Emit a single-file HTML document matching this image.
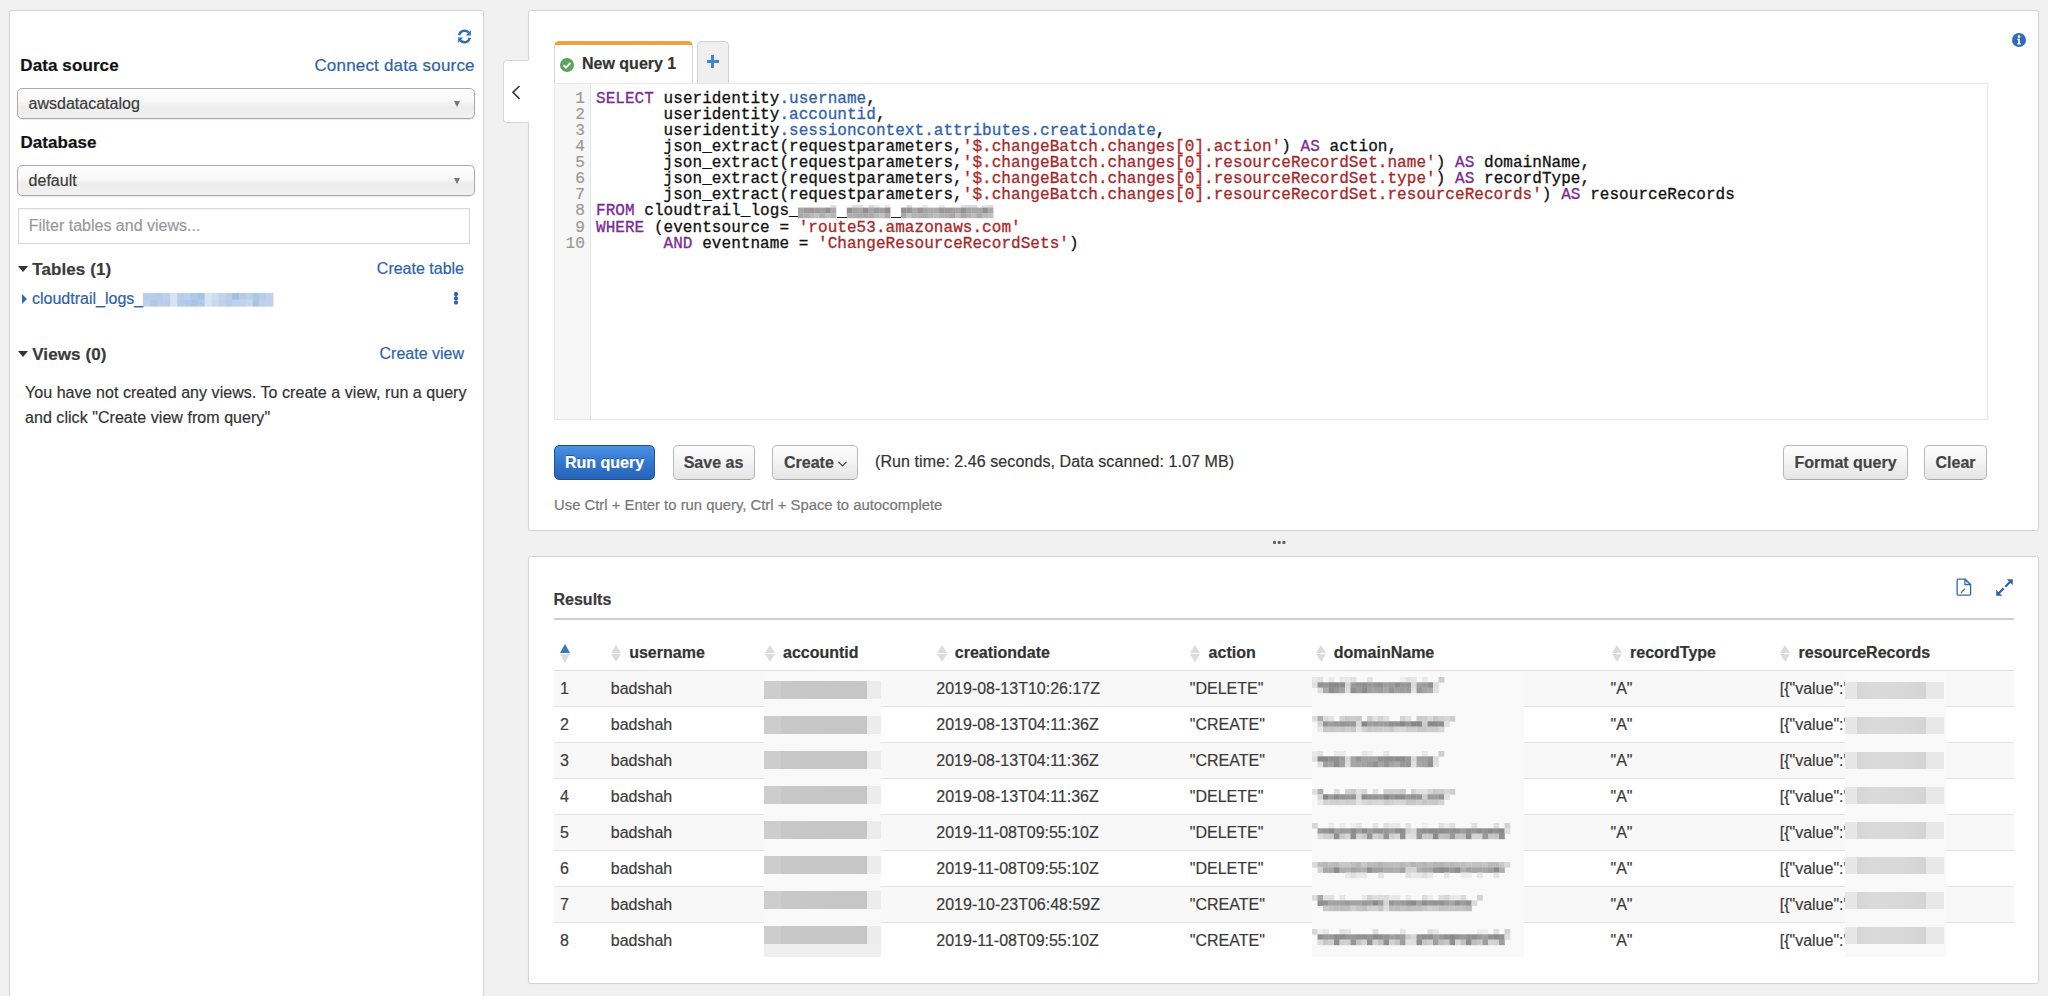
<!DOCTYPE html>
<html><head><meta charset="utf-8">
<style>
*{box-sizing:border-box;margin:0;padding:0}
html,body{width:2048px;height:996px;overflow:hidden;background:#f1f1f1;font-family:"Liberation Sans",sans-serif;color:#333;-webkit-text-stroke:0.2px currentColor}
.a{position:absolute;white-space:nowrap}
.panel{position:absolute;background:#fff;border:1px solid #d4d4d4;border-radius:2.5px;box-shadow:0 0 1px rgba(0,0,0,.08)}
.lbl{font-weight:bold;font-size:17px;line-height:17px;color:#111}
.link{color:#2d63a9;font-size:17px;line-height:17px}
.sel{position:absolute;border:1px solid #a9a9a9;border-radius:5px;background:linear-gradient(#fefefe,#f9f9f9 40%,#ededed 62%,#f1f1f1);box-shadow:0 1px 1px rgba(0,0,0,.08)}
.sel span{position:absolute;left:10.6px;font-size:16px;line-height:16px;color:#3a3a3a}
.tri{position:absolute;width:0;height:0;border-left:3.9px solid transparent;border-right:3.9px solid transparent;border-top:6px solid #777}
.btn{position:absolute;top:445px;height:35px;border:1px solid #b8b8b8;border-bottom-color:#a8a8a8;border-radius:5px;background:linear-gradient(#fdfdfd,#f3f3f3 50%,#e4e4e4);font-weight:bold;font-size:16px;color:#444;text-align:center}
.btn span{position:absolute;top:9.4px;line-height:16px;left:0;right:0}
.sort{position:absolute;width:11px;height:19px}
.sort:before{content:"";position:absolute;left:0.5px;top:1.2px;border-left:5px solid transparent;border-right:5px solid transparent;border-bottom:8px solid #dcdcdc}
.sort:after{content:"";position:absolute;left:0.5px;top:10.2px;border-left:5px solid transparent;border-right:5px solid transparent;border-top:8px solid #dcdcdc}
.th{font-weight:bold;font-size:16px;line-height:16px;color:#333}
.td{font-size:16px;line-height:16px;color:#3b3b3b}
.code{position:absolute;left:596px;top:90.6px;font-family:"Liberation Mono",monospace;font-size:16px;line-height:16.12px;color:#111;white-space:pre;letter-spacing:0.05px;-webkit-text-stroke:0.3px currentColor}
.k{color:#7a2a94}.p{color:#2f63ab}.s{color:#a8282a}
.ln{position:absolute;left:554.8px;width:30px;top:90.6px;font-family:"Liberation Mono",monospace;font-size:16px;line-height:16.12px;color:#999;text-align:right;white-space:pre}
.s0:before{border-bottom-color:#3479bd;left:0;top:0;border-left-width:5.4px;border-right-width:5.4px;border-bottom-width:9px}.s0:after{left:0;top:9.4px;border-left-width:5.4px;border-right-width:5.4px;border-top-width:9px}
.dn{height:13px;background:linear-gradient(90deg,#a9a9a9 0,#9a9a9a 15%,#dedede 18%,#b5b5b5 22%,#a0a0a0 45%,#cfcfcf 55%,#a6a6a6 70%,#bdbdbd 85%,#e6e6e6 100%);filter:blur(1.2px);opacity:.85}
.acc{width:117px;height:17.5px;background:linear-gradient(90deg,#cdcdcd 0,#cdcdcd 17px,#c8c8c8 17px,#c6c6c6 88%,#ececec 88%,#ececec 100%)}
.rr{width:99px;height:17px;background:linear-gradient(90deg,#e6e6e6 0,#e6e6e6 12px,#d6d6d6 12px,#dadada 30px,#d8d8d8 60px,#d4d4d4 82%,#e8e8e8 82%,#e8e8e8 100%)}
</style></head><body>

<!-- LEFT PANEL -->
<div class="panel" style="left:9px;top:10px;width:475px;height:1000px"></div>
<!-- refresh icon -->
<svg class="a" style="left:457px;top:29px" width="15" height="15" viewBox="0 0 15 15">
 <path d="M2.2 6.2A5.4 5.4 0 0 1 11.6 3.6" fill="none" stroke="#2e6db4" stroke-width="2.4"/>
 <path d="M13.8 1.2L13.8 6.4L8.8 6.4Z" fill="#2e6db4"/>
 <path d="M12.8 8.8A5.4 5.4 0 0 1 3.4 11.4" fill="none" stroke="#2e6db4" stroke-width="2.4"/>
 <path d="M1.2 13.8L1.2 8.6L6.2 8.6Z" fill="#2e6db4"/>
</svg>
<div class="a lbl" style="left:20.3px;top:56.8px;letter-spacing:0.1px">Data source</div>
<div class="a link" style="right:1573.3px;top:57.1px;letter-spacing:0.18px">Connect data source</div>
<div class="sel" style="left:17px;top:88px;width:458px;height:30.5px"><span style="top:7px">awsdatacatalog</span></div>
<div class="tri" style="left:454.2px;top:101px"></div>
<div class="a lbl" style="left:20.4px;top:133.8px;letter-spacing:0.06px">Database</div>
<div class="sel" style="left:17px;top:165.3px;width:458px;height:30.5px"><span style="top:7.2px">default</span></div>
<div class="tri" style="left:454.2px;top:178px"></div>
<div class="a" style="left:17.8px;top:208.3px;width:452.2px;height:35.5px;border:1px solid #d8d8d8;box-shadow:inset 0 1px 2px rgba(0,0,0,.07)"></div>
<div class="a" style="left:28.7px;top:218.4px;font-size:16px;line-height:16px;color:#999">Filter tables and views...</div>

<div class="a" style="left:17.6px;top:265.5px;width:0;height:0;border-left:5px solid transparent;border-right:5px solid transparent;border-top:6.7px solid #333"></div>
<div class="a lbl" style="left:32.2px;top:260.8px;color:#3a3a3a;letter-spacing:0.1px">Tables (1)</div>
<div class="a link" style="right:1584px;top:261px;font-size:16px;line-height:16px">Create table</div>
<div class="a" style="left:22px;top:294px;width:0;height:0;border-top:5px solid transparent;border-bottom:5px solid transparent;border-left:5.5px solid #2e6db4"></div>
<div class="a link" style="left:32px;top:291.1px;font-size:16px;line-height:16px">cloudtrail_logs_</div>
<svg class="a" style="left:140.00px;top:290.20px" width="136.15" height="19.30"><defs><filter id="b143_293" x="-10%" y="-30%" width="120%" height="160%"><feGaussianBlur stdDeviation="0.5"/></filter></defs><g filter="url(#b143_293)"><rect x="3.00" y="3.00" width="7.15" height="6.95" fill="rgb(184,205,233)"/><rect x="9.85" y="3.00" width="7.15" height="6.95" fill="rgb(184,205,233)"/><rect x="16.70" y="3.00" width="7.15" height="6.95" fill="rgb(181,203,232)"/><rect x="23.55" y="3.00" width="7.15" height="6.95" fill="rgb(187,208,235)"/><rect x="30.40" y="3.00" width="7.15" height="6.95" fill="rgb(215,228,244)"/><rect x="37.25" y="3.00" width="7.15" height="6.95" fill="rgb(184,205,233)"/><rect x="44.10" y="3.00" width="7.15" height="6.95" fill="rgb(187,208,235)"/><rect x="50.95" y="3.00" width="7.15" height="6.95" fill="rgb(177,201,231)"/><rect x="57.80" y="3.00" width="7.15" height="6.95" fill="rgb(168,193,228)"/><rect x="64.65" y="3.00" width="7.15" height="6.95" fill="rgb(216,229,244)"/><rect x="71.50" y="3.00" width="7.15" height="6.95" fill="rgb(205,221,240)"/><rect x="78.35" y="3.00" width="7.15" height="6.95" fill="rgb(192,211,236)"/><rect x="85.20" y="3.00" width="7.15" height="6.95" fill="rgb(184,205,233)"/><rect x="92.05" y="3.00" width="7.15" height="6.95" fill="rgb(164,191,227)"/><rect x="98.90" y="3.00" width="7.15" height="6.95" fill="rgb(181,203,232)"/><rect x="105.75" y="3.00" width="7.15" height="6.95" fill="rgb(187,208,235)"/><rect x="112.60" y="3.00" width="7.15" height="6.95" fill="rgb(174,198,230)"/><rect x="119.45" y="3.00" width="7.15" height="6.95" fill="rgb(184,205,233)"/><rect x="126.30" y="3.00" width="7.15" height="6.95" fill="rgb(190,210,236)"/><rect x="3.00" y="9.65" width="7.15" height="6.95" fill="rgb(187,208,235)"/><rect x="9.85" y="9.65" width="7.15" height="6.95" fill="rgb(177,201,231)"/><rect x="16.70" y="9.65" width="7.15" height="6.95" fill="rgb(184,205,233)"/><rect x="23.55" y="9.65" width="7.15" height="6.95" fill="rgb(184,205,233)"/><rect x="30.40" y="9.65" width="7.15" height="6.95" fill="rgb(213,227,243)"/><rect x="37.25" y="9.65" width="7.15" height="6.95" fill="rgb(181,203,232)"/><rect x="44.10" y="9.65" width="7.15" height="6.95" fill="rgb(176,200,231)"/><rect x="50.95" y="9.65" width="7.15" height="6.95" fill="rgb(171,196,229)"/><rect x="57.80" y="9.65" width="7.15" height="6.95" fill="rgb(177,201,231)"/><rect x="64.65" y="9.65" width="7.15" height="6.95" fill="rgb(213,227,243)"/><rect x="71.50" y="9.65" width="7.15" height="6.95" fill="rgb(200,217,239)"/><rect x="78.35" y="9.65" width="7.15" height="6.95" fill="rgb(187,208,235)"/><rect x="85.20" y="9.65" width="7.15" height="6.95" fill="rgb(181,203,232)"/><rect x="92.05" y="9.65" width="7.15" height="6.95" fill="rgb(187,208,235)"/><rect x="98.90" y="9.65" width="7.15" height="6.95" fill="rgb(194,212,237)"/><rect x="105.75" y="9.65" width="7.15" height="6.95" fill="rgb(198,216,238)"/><rect x="112.60" y="9.65" width="7.15" height="6.95" fill="rgb(171,196,229)"/><rect x="119.45" y="9.65" width="7.15" height="6.95" fill="rgb(187,208,235)"/><rect x="126.30" y="9.65" width="7.15" height="6.95" fill="rgb(190,210,236)"/></g></svg>
<div class="a" style="left:454.2px;top:292.4px;width:4px;height:3.4px;border-radius:1.6px;background:#2e63a8;box-shadow:0 4.3px 0 #2e63a8,0 8.6px 0 #2e63a8"></div>

<div class="a" style="left:17.6px;top:351.2px;width:0;height:0;border-left:5px solid transparent;border-right:5px solid transparent;border-top:6.7px solid #333"></div>
<div class="a lbl" style="left:32.2px;top:346.4px;color:#3a3a3a;letter-spacing:0.1px">Views (0)</div>
<div class="a link" style="right:1584px;top:345.5px;font-size:16px;line-height:16px">Create view</div>
<div class="a" style="left:25px;top:384.9px;font-size:16px;line-height:16px;color:#333;letter-spacing:0.05px">You have not created any views. To create a view, run a query</div>
<div class="a" style="left:25px;top:409.7px;font-size:16px;line-height:16px;color:#333;letter-spacing:0.05px">and click "Create view from query"</div>

<!-- MAIN EDITOR PANEL -->
<div class="panel" style="left:528px;top:10px;width:1511px;height:521px"></div>
<div class="a" style="left:503.2px;top:60.2px;width:26.3px;height:63px;background:#fff;border:1px solid #d6d6d6;border-right:none;border-radius:4px 0 0 4px"></div>
<svg class="a" style="left:511px;top:85px" width="10" height="15" viewBox="0 0 10 15"><path d="M8.5 1L2 7.3L8.5 13.8" fill="none" stroke="#3c3c3c" stroke-width="1.7"/></svg>

<!-- tabs -->
<div class="a" style="left:553.5px;top:41px;width:139px;height:43px;background:#fff;border:1px solid #d6d6d6;border-bottom:none;border-top:4px solid #f0a240;border-radius:5px 5px 0 0"></div>
<svg class="a" style="left:560.3px;top:57.7px" width="14" height="14" viewBox="0 0 14 14"><circle cx="7" cy="7" r="7" fill="#58a55c"/><path d="M3.6 7.2L6 9.6L10.5 4.9" fill="none" stroke="#fff" stroke-width="2"/></svg>
<div class="a" style="left:582px;top:55.9px;font-weight:bold;font-size:16px;line-height:16px;color:#333">New query 1</div>
<div class="a" style="left:697px;top:41px;width:32px;height:43px;background:#efefef;border:1px solid #d0d0d0;border-bottom:none;border-radius:5px 5px 0 0"></div>
<div class="a" style="left:706.7px;top:60px;width:12.4px;height:3.2px;background:#3f87c6"></div>
<div class="a" style="left:711.3px;top:55.4px;width:3.2px;height:12.4px;background:#3f87c6"></div>
<!-- info icon -->
<svg class="a" style="left:2011.6px;top:33.2px" width="14" height="14" viewBox="0 0 14 14"><circle cx="7" cy="7" r="7" fill="#2e6db4"/><circle cx="7" cy="3.6" r="1.3" fill="#fff"/><path d="M5.3 5.8H7.9V10.3H8.9V11.4H5.2V10.3H6.2V6.9H5.3Z" fill="#fff"/></svg>

<!-- editor -->
<div class="a" style="left:553.5px;top:83px;width:1434px;height:337px;border:1px solid #e9e9e9;background:#fff"></div>
<div class="a" style="left:554.5px;top:84px;width:36px;height:335px;background:#f7f7f7;border-right:1px solid #e4e4e4"></div>
<div class="ln">1
2
3
4
5
6
7
8
9
10</div>
<div class="code"><span class="k">SELECT</span> useridentity<span class="p">.username</span>,
       useridentity<span class="p">.accountid</span>,
       useridentity<span class="p">.sessioncontext.attributes.creationdate</span>,
       json_extract(requestparameters,<span class="s">'$.changeBatch.changes[0].action'</span>) <span class="k">AS</span> action,
       json_extract(requestparameters,<span class="s">'$.changeBatch.changes[0].resourceRecordSet.name'</span>) <span class="k">AS</span> domainName,
       json_extract(requestparameters,<span class="s">'$.changeBatch.changes[0].resourceRecordSet.type'</span>) <span class="k">AS</span> recordType,
       json_extract(requestparameters,<span class="s">'$.changeBatch.changes[0].resourceRecordSet.resourceRecords'</span>) <span class="k">AS</span> resourceRecords
<span class="k">FROM</span> cloudtrail_logs_
<span class="k">WHERE</span> (eventsource = <span class="s">'route53.amazonaws.com'</span>
       <span class="k">AND</span> eventname = <span class="s">'ChangeResourceRecordSets'</span>)</div>
<svg class="a" style="left:795.00px;top:201.60px" width="201.12" height="18.90"><defs><filter id="b798_204" x="-10%" y="-30%" width="120%" height="160%"><feGaussianBlur stdDeviation="0.55"/></filter></defs><g filter="url(#b798_204)"><rect x="35.52" y="3.00" width="5.72" height="2.90" fill="rgb(224,224,224)"/><rect x="57.20" y="3.00" width="5.72" height="2.90" fill="rgb(224,224,224)"/><rect x="62.62" y="3.00" width="5.72" height="2.90" fill="rgb(225,225,225)"/><rect x="73.46" y="3.00" width="5.72" height="2.90" fill="rgb(219,219,219)"/><rect x="78.88" y="3.00" width="5.72" height="2.90" fill="rgb(233,233,233)"/><rect x="89.72" y="3.00" width="5.72" height="2.90" fill="rgb(230,230,230)"/><rect x="111.40" y="3.00" width="5.72" height="2.90" fill="rgb(219,219,219)"/><rect x="127.66" y="3.00" width="5.72" height="2.90" fill="rgb(234,234,234)"/><rect x="143.92" y="3.00" width="5.72" height="2.90" fill="rgb(233,233,233)"/><rect x="165.60" y="3.00" width="5.72" height="2.90" fill="rgb(222,222,222)"/><rect x="171.02" y="3.00" width="5.72" height="2.90" fill="rgb(217,217,217)"/><rect x="176.44" y="3.00" width="5.72" height="2.90" fill="rgb(221,221,221)"/><rect x="187.28" y="3.00" width="5.72" height="2.90" fill="rgb(228,228,228)"/><rect x="192.70" y="3.00" width="5.72" height="2.90" fill="rgb(221,221,221)"/><rect x="3.00" y="5.60" width="5.72" height="6.00" fill="rgb(166,166,166)"/><rect x="8.42" y="5.60" width="5.72" height="6.00" fill="rgb(157,157,157)"/><rect x="13.84" y="5.60" width="5.72" height="6.00" fill="rgb(152,152,152)"/><rect x="19.26" y="5.60" width="5.72" height="6.00" fill="rgb(157,157,157)"/><rect x="24.68" y="5.60" width="5.72" height="6.00" fill="rgb(163,163,163)"/><rect x="30.10" y="5.60" width="5.72" height="6.00" fill="rgb(145,145,145)"/><rect x="35.52" y="5.60" width="5.72" height="6.00" fill="rgb(171,171,171)"/><rect x="51.78" y="5.60" width="5.72" height="6.00" fill="rgb(144,144,144)"/><rect x="57.20" y="5.60" width="5.72" height="6.00" fill="rgb(164,164,164)"/><rect x="62.62" y="5.60" width="5.72" height="6.00" fill="rgb(167,167,167)"/><rect x="68.04" y="5.60" width="5.72" height="6.00" fill="rgb(144,144,144)"/><rect x="73.46" y="5.60" width="5.72" height="6.00" fill="rgb(166,166,166)"/><rect x="78.88" y="5.60" width="5.72" height="6.00" fill="rgb(154,154,154)"/><rect x="84.30" y="5.60" width="5.72" height="6.00" fill="rgb(160,160,160)"/><rect x="89.72" y="5.60" width="5.72" height="6.00" fill="rgb(144,144,144)"/><rect x="105.98" y="5.60" width="5.72" height="6.00" fill="rgb(145,145,145)"/><rect x="111.40" y="5.60" width="5.72" height="6.00" fill="rgb(149,149,149)"/><rect x="116.82" y="5.60" width="5.72" height="6.00" fill="rgb(170,170,170)"/><rect x="122.24" y="5.60" width="5.72" height="6.00" fill="rgb(149,149,149)"/><rect x="127.66" y="5.60" width="5.72" height="6.00" fill="rgb(165,165,165)"/><rect x="133.08" y="5.60" width="5.72" height="6.00" fill="rgb(170,170,170)"/><rect x="138.50" y="5.60" width="5.72" height="6.00" fill="rgb(170,170,170)"/><rect x="143.92" y="5.60" width="5.72" height="6.00" fill="rgb(153,153,153)"/><rect x="149.34" y="5.60" width="5.72" height="6.00" fill="rgb(153,153,153)"/><rect x="154.76" y="5.60" width="5.72" height="6.00" fill="rgb(158,158,158)"/><rect x="160.18" y="5.60" width="5.72" height="6.00" fill="rgb(165,165,165)"/><rect x="165.60" y="5.60" width="5.72" height="6.00" fill="rgb(147,147,147)"/><rect x="171.02" y="5.60" width="5.72" height="6.00" fill="rgb(164,164,164)"/><rect x="176.44" y="5.60" width="5.72" height="6.00" fill="rgb(166,166,166)"/><rect x="181.86" y="5.60" width="5.72" height="6.00" fill="rgb(168,168,168)"/><rect x="187.28" y="5.60" width="5.72" height="6.00" fill="rgb(145,145,145)"/><rect x="192.70" y="5.60" width="5.72" height="6.00" fill="rgb(170,170,170)"/><rect x="3.00" y="11.30" width="5.72" height="4.90" fill="rgb(168,168,168)"/><rect x="8.42" y="11.30" width="5.72" height="4.90" fill="rgb(175,175,175)"/><rect x="13.84" y="11.30" width="5.72" height="4.90" fill="rgb(183,183,183)"/><rect x="19.26" y="11.30" width="5.72" height="4.90" fill="rgb(191,191,191)"/><rect x="24.68" y="11.30" width="5.72" height="4.90" fill="rgb(175,175,175)"/><rect x="30.10" y="11.30" width="5.72" height="4.90" fill="rgb(191,191,191)"/><rect x="35.52" y="11.30" width="5.72" height="4.90" fill="rgb(181,181,181)"/><rect x="51.78" y="11.30" width="5.72" height="4.90" fill="rgb(174,174,174)"/><rect x="57.20" y="11.30" width="5.72" height="4.90" fill="rgb(174,174,174)"/><rect x="62.62" y="11.30" width="5.72" height="4.90" fill="rgb(170,170,170)"/><rect x="68.04" y="11.30" width="5.72" height="4.90" fill="rgb(168,168,168)"/><rect x="73.46" y="11.30" width="5.72" height="4.90" fill="rgb(170,170,170)"/><rect x="78.88" y="11.30" width="5.72" height="4.90" fill="rgb(185,185,185)"/><rect x="84.30" y="11.30" width="5.72" height="4.90" fill="rgb(193,193,193)"/><rect x="89.72" y="11.30" width="5.72" height="4.90" fill="rgb(170,170,170)"/><rect x="105.98" y="11.30" width="5.72" height="4.90" fill="rgb(167,167,167)"/><rect x="111.40" y="11.30" width="5.72" height="4.90" fill="rgb(193,193,193)"/><rect x="116.82" y="11.30" width="5.72" height="4.90" fill="rgb(180,180,180)"/><rect x="122.24" y="11.30" width="5.72" height="4.90" fill="rgb(177,177,177)"/><rect x="127.66" y="11.30" width="5.72" height="4.90" fill="rgb(172,172,172)"/><rect x="133.08" y="11.30" width="5.72" height="4.90" fill="rgb(182,182,182)"/><rect x="138.50" y="11.30" width="5.72" height="4.90" fill="rgb(189,189,189)"/><rect x="143.92" y="11.30" width="5.72" height="4.90" fill="rgb(178,178,178)"/><rect x="149.34" y="11.30" width="5.72" height="4.90" fill="rgb(177,177,177)"/><rect x="154.76" y="11.30" width="5.72" height="4.90" fill="rgb(167,167,167)"/><rect x="160.18" y="11.30" width="5.72" height="4.90" fill="rgb(191,191,191)"/><rect x="165.60" y="11.30" width="5.72" height="4.90" fill="rgb(166,166,166)"/><rect x="171.02" y="11.30" width="5.72" height="4.90" fill="rgb(179,179,179)"/><rect x="176.44" y="11.30" width="5.72" height="4.90" fill="rgb(189,189,189)"/><rect x="181.86" y="11.30" width="5.72" height="4.90" fill="rgb(169,169,169)"/><rect x="187.28" y="11.30" width="5.72" height="4.90" fill="rgb(186,186,186)"/><rect x="192.70" y="11.30" width="5.72" height="4.90" fill="rgb(192,192,192)"/></g></svg><div class="a" style="left:836.5px;top:216.6px;width:10px;height:1.2px;background:#222"></div><div class="a" style="left:890.8px;top:216.6px;width:10px;height:1.2px;background:#222"></div>

<!-- buttons -->
<div class="btn" style="left:554px;width:101px;border-color:#1d5299;background:linear-gradient(#4b91e2,#3277cf 50%,#2664b8);color:#fff;text-shadow:0 -1px 0 rgba(0,0,0,.35)"><span>Run query</span></div>
<div class="btn" style="left:672.5px;width:82px"><span>Save as</span></div>
<div class="btn" style="left:772px;width:86px"><span style="left:11px;right:auto">Create</span>
 <svg style="position:absolute;left:65px;top:14.5px" width="9" height="6" viewBox="0 0 9 6"><path d="M0.5 0.8L4.5 4.8L8.5 0.8" fill="none" stroke="#444" stroke-width="1.2"/></svg></div>
<div class="a" style="left:875px;top:453.5px;font-size:16px;line-height:16px;color:#333;letter-spacing:0.09px">(Run time: 2.46 seconds, Data scanned: 1.07 MB)</div>
<div class="btn" style="left:1783px;width:125px"><span>Format query</span></div>
<div class="btn" style="left:1924px;width:63px"><span>Clear</span></div>
<div class="a" style="left:554px;top:497.6px;font-size:14.85px;line-height:15px;color:#777">Use Ctrl + Enter to run query, Ctrl + Space to autocomplete</div>

<!-- resize dots -->
<div class="a" style="left:1273.2px;top:540.6px;width:3.3px;height:3.4px;border-radius:0.9px;background:#5e5e5e;box-shadow:4.7px 0 0 #5e5e5e,9.4px 0 0 #5e5e5e"></div>

<!-- RESULTS PANEL -->
<div class="panel" style="left:528px;top:556px;width:1511px;height:427.5px"></div>
<div class="a" style="left:553.5px;top:591.9px;font-weight:bold;font-size:16px;line-height:16px;color:#3a3a3a">Results</div>
<div class="a" style="left:553.5px;top:618px;width:1460px;height:1.5px;background:#cfcfcf"></div>
<!-- results icons -->
<svg class="a" style="left:1955.9px;top:578.3px" width="16" height="19" viewBox="0 0 16 19"><path d="M1.1 2.2Q1.1 1.1 2.2 1.1H9.2L14.6 6.6V16.1Q14.6 17.2 13.5 17.2H2.2Q1.1 17.2 1.1 16.1Z" fill="none" stroke="#3068b0" stroke-width="1.3"/><path d="M8.9 1.3V6.6H14.4Z" fill="#d6e4f6" stroke="#3068b0" stroke-width="1.2" stroke-linejoin="round"/><path d="M5 15.2Q6.4 12.6 8.8 11" fill="none" stroke="#3068b0" stroke-width="1.2"/></svg>
<svg class="a" style="left:1996px;top:579px" width="17" height="17" viewBox="0 0 17 17"><path d="M10.8 0.2H16.8V6.2Z" fill="#2e63ad"/><path d="M14.2 2.8L9.3 7.7" stroke="#2e63ad" stroke-width="2.3"/><path d="M0.2 10.8V16.8H6.2Z" fill="#2e63ad"/><path d="M2.8 14.2L7.7 9.3" stroke="#2e63ad" stroke-width="2.3"/></svg>

<!--TABLE-->
<div class="sort s0" style="left:559.6px;top:644.3px"></div>
<div class="sort" style="left:610.4px;top:644.3px"></div>
<div class="a th" style="left:629.2px;top:645.2px">username</div>
<div class="sort" style="left:764.2px;top:644.3px"></div>
<div class="a th" style="left:783.0px;top:645.2px">accountid</div>
<div class="sort" style="left:936.0px;top:644.3px"></div>
<div class="a th" style="left:954.8px;top:645.2px">creationdate</div>
<div class="sort" style="left:1189.8px;top:644.3px"></div>
<div class="a th" style="left:1208.6px;top:645.2px">action</div>
<div class="sort" style="left:1315.0px;top:644.3px"></div>
<div class="a th" style="left:1333.8px;top:645.2px">domainName</div>
<div class="sort" style="left:1611.2px;top:644.3px"></div>
<div class="a th" style="left:1630.0px;top:645.2px">recordType</div>
<div class="sort" style="left:1779.7px;top:644.3px"></div>
<div class="a th" style="left:1798.5px;top:645.2px">resourceRecords</div>
<div class="a" style="left:553.5px;top:669.5px;width:1460px;height:1px;background:#dedede"></div>
<div class="a" style="left:553.5px;top:670.5px;width:1460px;height:35.97px;background:#f8f8f8"></div>
<div class="a" style="left:553.5px;top:742.4px;width:1460px;height:35.97px;background:#f8f8f8"></div>
<div class="a" style="left:553.5px;top:814.4px;width:1460px;height:35.97px;background:#f8f8f8"></div>
<div class="a" style="left:553.5px;top:886.3px;width:1460px;height:35.97px;background:#f8f8f8"></div>
<div class="a" style="left:553.5px;top:706.1px;width:1460px;height:1px;background:#e3e3e3"></div>
<div class="a td" style="left:560.0px;top:680.9px">1</div>
<div class="a td" style="left:610.8px;top:680.9px">badshah</div>
<div class="a td" style="left:936.3px;top:680.9px">2019-08-13T10:26:17Z</div>
<div class="a td" style="left:1189.8px;top:680.9px">"DELETE"</div>
<div class="a td" style="left:1610.5px;top:680.9px">"A"</div>
<div class="a td" style="left:1779.7px;top:680.9px">[{"value":'</div>
<div class="a" style="left:553.5px;top:742.1px;width:1460px;height:1px;background:#e3e3e3"></div>
<div class="a td" style="left:560.0px;top:716.9px">2</div>
<div class="a td" style="left:610.8px;top:716.9px">badshah</div>
<div class="a td" style="left:936.3px;top:716.9px">2019-08-13T04:11:36Z</div>
<div class="a td" style="left:1189.8px;top:716.9px">"CREATE"</div>
<div class="a td" style="left:1610.5px;top:716.9px">"A"</div>
<div class="a td" style="left:1779.7px;top:716.9px">[{"value":'</div>
<div class="a" style="left:553.5px;top:778.0px;width:1460px;height:1px;background:#e3e3e3"></div>
<div class="a td" style="left:560.0px;top:752.8px">3</div>
<div class="a td" style="left:610.8px;top:752.8px">badshah</div>
<div class="a td" style="left:936.3px;top:752.8px">2019-08-13T04:11:36Z</div>
<div class="a td" style="left:1189.8px;top:752.8px">"CREATE"</div>
<div class="a td" style="left:1610.5px;top:752.8px">"A"</div>
<div class="a td" style="left:1779.7px;top:752.8px">[{"value":'</div>
<div class="a" style="left:553.5px;top:814.0px;width:1460px;height:1px;background:#e3e3e3"></div>
<div class="a td" style="left:560.0px;top:788.8px">4</div>
<div class="a td" style="left:610.8px;top:788.8px">badshah</div>
<div class="a td" style="left:936.3px;top:788.8px">2019-08-13T04:11:36Z</div>
<div class="a td" style="left:1189.8px;top:788.8px">"DELETE"</div>
<div class="a td" style="left:1610.5px;top:788.8px">"A"</div>
<div class="a td" style="left:1779.7px;top:788.8px">[{"value":'</div>
<div class="a" style="left:553.5px;top:850.0px;width:1460px;height:1px;background:#e3e3e3"></div>
<div class="a td" style="left:560.0px;top:824.8px">5</div>
<div class="a td" style="left:610.8px;top:824.8px">badshah</div>
<div class="a td" style="left:936.3px;top:824.8px">2019-11-08T09:55:10Z</div>
<div class="a td" style="left:1189.8px;top:824.8px">"DELETE"</div>
<div class="a td" style="left:1610.5px;top:824.8px">"A"</div>
<div class="a td" style="left:1779.7px;top:824.8px">[{"value":'</div>
<div class="a" style="left:553.5px;top:886.0px;width:1460px;height:1px;background:#e3e3e3"></div>
<div class="a td" style="left:560.0px;top:860.8px">6</div>
<div class="a td" style="left:610.8px;top:860.8px">badshah</div>
<div class="a td" style="left:936.3px;top:860.8px">2019-11-08T09:55:10Z</div>
<div class="a td" style="left:1189.8px;top:860.8px">"DELETE"</div>
<div class="a td" style="left:1610.5px;top:860.8px">"A"</div>
<div class="a td" style="left:1779.7px;top:860.8px">[{"value":'</div>
<div class="a" style="left:553.5px;top:921.9px;width:1460px;height:1px;background:#e3e3e3"></div>
<div class="a td" style="left:560.0px;top:896.7px">7</div>
<div class="a td" style="left:610.8px;top:896.7px">badshah</div>
<div class="a td" style="left:936.3px;top:896.7px">2019-10-23T06:48:59Z</div>
<div class="a td" style="left:1189.8px;top:896.7px">"CREATE"</div>
<div class="a td" style="left:1610.5px;top:896.7px">"A"</div>
<div class="a td" style="left:1779.7px;top:896.7px">[{"value":'</div>
<div class="a td" style="left:560.0px;top:932.7px">8</div>
<div class="a td" style="left:610.8px;top:932.7px">badshah</div>
<div class="a td" style="left:936.3px;top:932.7px">2019-11-08T09:55:10Z</div>
<div class="a td" style="left:1189.8px;top:932.7px">"CREATE"</div>
<div class="a td" style="left:1610.5px;top:932.7px">"A"</div>
<div class="a td" style="left:1779.7px;top:932.7px">[{"value":'</div>
<div class="a" style="left:763.6px;top:671px;width:117.4px;height:286px;background:#f9f9f9"></div>
<div class="a" style="left:1312px;top:671px;width:212px;height:286px;background:#f9f9f9"></div>
<div class="a" style="left:1845px;top:671px;width:101px;height:286px;background:#f9f9f9"></div>
<div class="a acc" style="left:763.6px;top:681.2px"></div>
<div class="a rr" style="left:1845px;top:681.6px"></div>
<svg class="a" style="left:1309.00px;top:673.80px" width="138.00" height="21.90"><defs><filter id="b1312_676" x="-10%" y="-30%" width="120%" height="160%"><feGaussianBlur stdDeviation="0.6"/></filter></defs><g filter="url(#b1312_676)"><rect x="3.00" y="3.00" width="5.80" height="5.60" fill="rgb(232,232,232)"/><rect x="8.50" y="3.00" width="5.80" height="5.60" fill="rgb(227,227,227)"/><rect x="19.50" y="3.00" width="5.80" height="5.60" fill="rgb(234,234,234)"/><rect x="30.50" y="3.00" width="5.80" height="5.60" fill="rgb(233,233,233)"/><rect x="36.00" y="3.00" width="5.80" height="5.60" fill="rgb(232,232,232)"/><rect x="41.50" y="3.00" width="5.80" height="5.60" fill="rgb(226,226,226)"/><rect x="58.00" y="3.00" width="5.80" height="5.60" fill="rgb(228,228,228)"/><rect x="91.00" y="3.00" width="5.80" height="5.60" fill="rgb(239,239,239)"/><rect x="96.50" y="3.00" width="5.80" height="5.60" fill="rgb(227,227,227)"/><rect x="102.00" y="3.00" width="5.80" height="5.60" fill="rgb(230,230,230)"/><rect x="113.00" y="3.00" width="5.80" height="5.60" fill="rgb(234,234,234)"/><rect x="129.50" y="3.00" width="5.80" height="5.60" fill="rgb(205,205,205)"/><rect x="3.00" y="8.30" width="5.80" height="5.60" fill="rgb(225,225,225)"/><rect x="8.50" y="8.30" width="5.80" height="5.60" fill="rgb(146,146,146)"/><rect x="14.00" y="8.30" width="5.80" height="5.60" fill="rgb(151,151,151)"/><rect x="19.50" y="8.30" width="5.80" height="5.60" fill="rgb(137,137,137)"/><rect x="25.00" y="8.30" width="5.80" height="5.60" fill="rgb(137,137,137)"/><rect x="30.50" y="8.30" width="5.80" height="5.60" fill="rgb(141,141,141)"/><rect x="36.00" y="8.30" width="5.80" height="5.60" fill="rgb(215,215,215)"/><rect x="41.50" y="8.30" width="5.80" height="5.60" fill="rgb(155,155,155)"/><rect x="47.00" y="8.30" width="5.80" height="5.60" fill="rgb(147,147,147)"/><rect x="52.50" y="8.30" width="5.80" height="5.60" fill="rgb(144,144,144)"/><rect x="58.00" y="8.30" width="5.80" height="5.60" fill="rgb(152,152,152)"/><rect x="63.50" y="8.30" width="5.80" height="5.60" fill="rgb(148,148,148)"/><rect x="69.00" y="8.30" width="5.80" height="5.60" fill="rgb(144,144,144)"/><rect x="74.50" y="8.30" width="5.80" height="5.60" fill="rgb(158,158,158)"/><rect x="80.00" y="8.30" width="5.80" height="5.60" fill="rgb(155,155,155)"/><rect x="85.50" y="8.30" width="5.80" height="5.60" fill="rgb(142,142,142)"/><rect x="91.00" y="8.30" width="5.80" height="5.60" fill="rgb(152,152,152)"/><rect x="96.50" y="8.30" width="5.80" height="5.60" fill="rgb(150,150,150)"/><rect x="102.00" y="8.30" width="5.80" height="5.60" fill="rgb(218,218,218)"/><rect x="107.50" y="8.30" width="5.80" height="5.60" fill="rgb(160,160,160)"/><rect x="113.00" y="8.30" width="5.80" height="5.60" fill="rgb(156,156,156)"/><rect x="118.50" y="8.30" width="5.80" height="5.60" fill="rgb(144,144,144)"/><rect x="124.00" y="8.30" width="5.80" height="5.60" fill="rgb(220,220,220)"/><rect x="8.50" y="13.60" width="5.80" height="5.60" fill="rgb(222,222,222)"/><rect x="14.00" y="13.60" width="5.80" height="5.60" fill="rgb(170,170,170)"/><rect x="19.50" y="13.60" width="5.80" height="5.60" fill="rgb(142,142,142)"/><rect x="25.00" y="13.60" width="5.80" height="5.60" fill="rgb(152,152,152)"/><rect x="30.50" y="13.60" width="5.80" height="5.60" fill="rgb(163,163,163)"/><rect x="36.00" y="13.60" width="5.80" height="5.60" fill="rgb(222,222,222)"/><rect x="41.50" y="13.60" width="5.80" height="5.60" fill="rgb(143,143,143)"/><rect x="47.00" y="13.60" width="5.80" height="5.60" fill="rgb(154,154,154)"/><rect x="52.50" y="13.60" width="5.80" height="5.60" fill="rgb(140,140,140)"/><rect x="58.00" y="13.60" width="5.80" height="5.60" fill="rgb(160,160,160)"/><rect x="63.50" y="13.60" width="5.80" height="5.60" fill="rgb(163,163,163)"/><rect x="69.00" y="13.60" width="5.80" height="5.60" fill="rgb(157,157,157)"/><rect x="74.50" y="13.60" width="5.80" height="5.60" fill="rgb(167,167,167)"/><rect x="80.00" y="13.60" width="5.80" height="5.60" fill="rgb(149,149,149)"/><rect x="85.50" y="13.60" width="5.80" height="5.60" fill="rgb(161,161,161)"/><rect x="91.00" y="13.60" width="5.80" height="5.60" fill="rgb(158,158,158)"/><rect x="96.50" y="13.60" width="5.80" height="5.60" fill="rgb(157,157,157)"/><rect x="102.00" y="13.60" width="5.80" height="5.60" fill="rgb(225,225,225)"/><rect x="107.50" y="13.60" width="5.80" height="5.60" fill="rgb(153,153,153)"/><rect x="113.00" y="13.60" width="5.80" height="5.60" fill="rgb(165,165,165)"/><rect x="118.50" y="13.60" width="5.80" height="5.60" fill="rgb(169,169,169)"/><rect x="124.00" y="13.60" width="5.80" height="5.60" fill="rgb(225,225,225)"/></g></svg>
<div class="a acc" style="left:763.6px;top:716.2px"></div>
<div class="a rr" style="left:1845px;top:716.6px"></div>
<svg class="a" style="left:1309.00px;top:713.00px" width="149.00" height="21.90"><defs><filter id="b1312_716" x="-10%" y="-30%" width="120%" height="160%"><feGaussianBlur stdDeviation="0.6"/></filter></defs><g filter="url(#b1312_716)"><rect x="3.00" y="3.00" width="5.80" height="5.60" fill="rgb(222,222,222)"/><rect x="8.50" y="3.00" width="5.80" height="5.60" fill="rgb(175,175,175)"/><rect x="14.00" y="3.00" width="5.80" height="5.60" fill="rgb(219,219,219)"/><rect x="19.50" y="3.00" width="5.80" height="5.60" fill="rgb(227,227,227)"/><rect x="30.50" y="3.00" width="5.80" height="5.60" fill="rgb(210,210,210)"/><rect x="36.00" y="3.00" width="5.80" height="5.60" fill="rgb(200,200,200)"/><rect x="41.50" y="3.00" width="5.80" height="5.60" fill="rgb(204,204,204)"/><rect x="47.00" y="3.00" width="5.80" height="5.60" fill="rgb(201,201,201)"/><rect x="58.00" y="3.00" width="5.80" height="5.60" fill="rgb(206,206,206)"/><rect x="63.50" y="3.00" width="5.80" height="5.60" fill="rgb(224,224,224)"/><rect x="69.00" y="3.00" width="5.80" height="5.60" fill="rgb(212,212,212)"/><rect x="74.50" y="3.00" width="5.80" height="5.60" fill="rgb(224,224,224)"/><rect x="91.00" y="3.00" width="5.80" height="5.60" fill="rgb(211,211,211)"/><rect x="96.50" y="3.00" width="5.80" height="5.60" fill="rgb(224,224,224)"/><rect x="107.50" y="3.00" width="5.80" height="5.60" fill="rgb(204,204,204)"/><rect x="113.00" y="3.00" width="5.80" height="5.60" fill="rgb(206,206,206)"/><rect x="118.50" y="3.00" width="5.80" height="5.60" fill="rgb(216,216,216)"/><rect x="124.00" y="3.00" width="5.80" height="5.60" fill="rgb(200,200,200)"/><rect x="129.50" y="3.00" width="5.80" height="5.60" fill="rgb(210,210,210)"/><rect x="135.00" y="3.00" width="5.80" height="5.60" fill="rgb(215,215,215)"/><rect x="140.50" y="3.00" width="5.80" height="5.60" fill="rgb(205,205,205)"/><rect x="8.50" y="8.30" width="5.80" height="5.60" fill="rgb(212,212,212)"/><rect x="14.00" y="8.30" width="5.80" height="5.60" fill="rgb(149,149,149)"/><rect x="19.50" y="8.30" width="5.80" height="5.60" fill="rgb(160,160,160)"/><rect x="25.00" y="8.30" width="5.80" height="5.60" fill="rgb(153,153,153)"/><rect x="30.50" y="8.30" width="5.80" height="5.60" fill="rgb(148,148,148)"/><rect x="36.00" y="8.30" width="5.80" height="5.60" fill="rgb(151,151,151)"/><rect x="41.50" y="8.30" width="5.80" height="5.60" fill="rgb(152,152,152)"/><rect x="47.00" y="8.30" width="5.80" height="5.60" fill="rgb(218,218,218)"/><rect x="52.50" y="8.30" width="5.80" height="5.60" fill="rgb(135,135,135)"/><rect x="58.00" y="8.30" width="5.80" height="5.60" fill="rgb(159,159,159)"/><rect x="63.50" y="8.30" width="5.80" height="5.60" fill="rgb(155,155,155)"/><rect x="69.00" y="8.30" width="5.80" height="5.60" fill="rgb(158,158,158)"/><rect x="74.50" y="8.30" width="5.80" height="5.60" fill="rgb(156,156,156)"/><rect x="80.00" y="8.30" width="5.80" height="5.60" fill="rgb(144,144,144)"/><rect x="85.50" y="8.30" width="5.80" height="5.60" fill="rgb(145,145,145)"/><rect x="91.00" y="8.30" width="5.80" height="5.60" fill="rgb(136,136,136)"/><rect x="96.50" y="8.30" width="5.80" height="5.60" fill="rgb(151,151,151)"/><rect x="102.00" y="8.30" width="5.80" height="5.60" fill="rgb(135,135,135)"/><rect x="107.50" y="8.30" width="5.80" height="5.60" fill="rgb(135,135,135)"/><rect x="113.00" y="8.30" width="5.80" height="5.60" fill="rgb(205,205,205)"/><rect x="118.50" y="8.30" width="5.80" height="5.60" fill="rgb(139,139,139)"/><rect x="124.00" y="8.30" width="5.80" height="5.60" fill="rgb(138,138,138)"/><rect x="129.50" y="8.30" width="5.80" height="5.60" fill="rgb(143,143,143)"/><rect x="135.00" y="8.30" width="5.80" height="5.60" fill="rgb(225,225,225)"/><rect x="8.50" y="13.60" width="5.80" height="5.60" fill="rgb(232,232,232)"/><rect x="14.00" y="13.60" width="5.80" height="5.60" fill="rgb(199,199,199)"/><rect x="19.50" y="13.60" width="5.80" height="5.60" fill="rgb(198,198,198)"/><rect x="25.00" y="13.60" width="5.80" height="5.60" fill="rgb(201,201,201)"/><rect x="30.50" y="13.60" width="5.80" height="5.60" fill="rgb(200,200,200)"/><rect x="36.00" y="13.60" width="5.80" height="5.60" fill="rgb(205,205,205)"/><rect x="41.50" y="13.60" width="5.80" height="5.60" fill="rgb(198,198,198)"/><rect x="47.00" y="13.60" width="5.80" height="5.60" fill="rgb(228,228,228)"/><rect x="52.50" y="13.60" width="5.80" height="5.60" fill="rgb(210,210,210)"/><rect x="58.00" y="13.60" width="5.80" height="5.60" fill="rgb(200,200,200)"/><rect x="63.50" y="13.60" width="5.80" height="5.60" fill="rgb(203,203,203)"/><rect x="69.00" y="13.60" width="5.80" height="5.60" fill="rgb(204,204,204)"/><rect x="74.50" y="13.60" width="5.80" height="5.60" fill="rgb(205,205,205)"/><rect x="80.00" y="13.60" width="5.80" height="5.60" fill="rgb(200,200,200)"/><rect x="85.50" y="13.60" width="5.80" height="5.60" fill="rgb(214,214,214)"/><rect x="91.00" y="13.60" width="5.80" height="5.60" fill="rgb(217,217,217)"/><rect x="96.50" y="13.60" width="5.80" height="5.60" fill="rgb(207,207,207)"/><rect x="102.00" y="13.60" width="5.80" height="5.60" fill="rgb(207,207,207)"/><rect x="107.50" y="13.60" width="5.80" height="5.60" fill="rgb(199,199,199)"/><rect x="113.00" y="13.60" width="5.80" height="5.60" fill="rgb(200,200,200)"/><rect x="118.50" y="13.60" width="5.80" height="5.60" fill="rgb(204,204,204)"/><rect x="124.00" y="13.60" width="5.80" height="5.60" fill="rgb(203,203,203)"/><rect x="129.50" y="13.60" width="5.80" height="5.60" fill="rgb(214,214,214)"/></g></svg>
<div class="a acc" style="left:763.6px;top:751.2px"></div>
<div class="a rr" style="left:1845px;top:751.6px"></div>
<svg class="a" style="left:1309.00px;top:747.60px" width="138.00" height="21.90"><defs><filter id="b1312_750" x="-10%" y="-30%" width="120%" height="160%"><feGaussianBlur stdDeviation="0.6"/></filter></defs><g filter="url(#b1312_750)"><rect x="3.00" y="3.00" width="5.80" height="5.60" fill="rgb(232,232,232)"/><rect x="8.50" y="3.00" width="5.80" height="5.60" fill="rgb(225,225,225)"/><rect x="25.00" y="3.00" width="5.80" height="5.60" fill="rgb(234,234,234)"/><rect x="30.50" y="3.00" width="5.80" height="5.60" fill="rgb(233,233,233)"/><rect x="52.50" y="3.00" width="5.80" height="5.60" fill="rgb(231,231,231)"/><rect x="58.00" y="3.00" width="5.80" height="5.60" fill="rgb(238,238,238)"/><rect x="74.50" y="3.00" width="5.80" height="5.60" fill="rgb(228,228,228)"/><rect x="113.00" y="3.00" width="5.80" height="5.60" fill="rgb(233,233,233)"/><rect x="129.50" y="3.00" width="5.80" height="5.60" fill="rgb(205,205,205)"/><rect x="3.00" y="8.30" width="5.80" height="5.60" fill="rgb(225,225,225)"/><rect x="8.50" y="8.30" width="5.80" height="5.60" fill="rgb(136,136,136)"/><rect x="14.00" y="8.30" width="5.80" height="5.60" fill="rgb(136,136,136)"/><rect x="19.50" y="8.30" width="5.80" height="5.60" fill="rgb(143,143,143)"/><rect x="25.00" y="8.30" width="5.80" height="5.60" fill="rgb(143,143,143)"/><rect x="30.50" y="8.30" width="5.80" height="5.60" fill="rgb(155,155,155)"/><rect x="36.00" y="8.30" width="5.80" height="5.60" fill="rgb(215,215,215)"/><rect x="41.50" y="8.30" width="5.80" height="5.60" fill="rgb(162,162,162)"/><rect x="47.00" y="8.30" width="5.80" height="5.60" fill="rgb(148,148,148)"/><rect x="52.50" y="8.30" width="5.80" height="5.60" fill="rgb(162,162,162)"/><rect x="58.00" y="8.30" width="5.80" height="5.60" fill="rgb(163,163,163)"/><rect x="63.50" y="8.30" width="5.80" height="5.60" fill="rgb(162,162,162)"/><rect x="69.00" y="8.30" width="5.80" height="5.60" fill="rgb(146,146,146)"/><rect x="74.50" y="8.30" width="5.80" height="5.60" fill="rgb(142,142,142)"/><rect x="80.00" y="8.30" width="5.80" height="5.60" fill="rgb(142,142,142)"/><rect x="85.50" y="8.30" width="5.80" height="5.60" fill="rgb(141,141,141)"/><rect x="91.00" y="8.30" width="5.80" height="5.60" fill="rgb(141,141,141)"/><rect x="96.50" y="8.30" width="5.80" height="5.60" fill="rgb(153,153,153)"/><rect x="102.00" y="8.30" width="5.80" height="5.60" fill="rgb(218,218,218)"/><rect x="107.50" y="8.30" width="5.80" height="5.60" fill="rgb(161,161,161)"/><rect x="113.00" y="8.30" width="5.80" height="5.60" fill="rgb(159,159,159)"/><rect x="118.50" y="8.30" width="5.80" height="5.60" fill="rgb(149,149,149)"/><rect x="124.00" y="8.30" width="5.80" height="5.60" fill="rgb(220,220,220)"/><rect x="8.50" y="13.60" width="5.80" height="5.60" fill="rgb(222,222,222)"/><rect x="14.00" y="13.60" width="5.80" height="5.60" fill="rgb(159,159,159)"/><rect x="19.50" y="13.60" width="5.80" height="5.60" fill="rgb(164,164,164)"/><rect x="25.00" y="13.60" width="5.80" height="5.60" fill="rgb(141,141,141)"/><rect x="30.50" y="13.60" width="5.80" height="5.60" fill="rgb(160,160,160)"/><rect x="36.00" y="13.60" width="5.80" height="5.60" fill="rgb(222,222,222)"/><rect x="41.50" y="13.60" width="5.80" height="5.60" fill="rgb(168,168,168)"/><rect x="47.00" y="13.60" width="5.80" height="5.60" fill="rgb(164,164,164)"/><rect x="52.50" y="13.60" width="5.80" height="5.60" fill="rgb(163,163,163)"/><rect x="58.00" y="13.60" width="5.80" height="5.60" fill="rgb(154,154,154)"/><rect x="63.50" y="13.60" width="5.80" height="5.60" fill="rgb(144,144,144)"/><rect x="69.00" y="13.60" width="5.80" height="5.60" fill="rgb(164,164,164)"/><rect x="74.50" y="13.60" width="5.80" height="5.60" fill="rgb(149,149,149)"/><rect x="80.00" y="13.60" width="5.80" height="5.60" fill="rgb(164,164,164)"/><rect x="85.50" y="13.60" width="5.80" height="5.60" fill="rgb(170,170,170)"/><rect x="91.00" y="13.60" width="5.80" height="5.60" fill="rgb(151,151,151)"/><rect x="96.50" y="13.60" width="5.80" height="5.60" fill="rgb(151,151,151)"/><rect x="102.00" y="13.60" width="5.80" height="5.60" fill="rgb(225,225,225)"/><rect x="107.50" y="13.60" width="5.80" height="5.60" fill="rgb(169,169,169)"/><rect x="113.00" y="13.60" width="5.80" height="5.60" fill="rgb(162,162,162)"/><rect x="118.50" y="13.60" width="5.80" height="5.60" fill="rgb(144,144,144)"/><rect x="124.00" y="13.60" width="5.80" height="5.60" fill="rgb(225,225,225)"/></g></svg>
<div class="a acc" style="left:763.6px;top:786.2px"></div>
<div class="a rr" style="left:1845px;top:786.6px"></div>
<svg class="a" style="left:1309.00px;top:786.00px" width="149.00" height="21.90"><defs><filter id="b1312_789" x="-10%" y="-30%" width="120%" height="160%"><feGaussianBlur stdDeviation="0.6"/></filter></defs><g filter="url(#b1312_789)"><rect x="3.00" y="3.00" width="5.80" height="5.60" fill="rgb(222,222,222)"/><rect x="8.50" y="3.00" width="5.80" height="5.60" fill="rgb(175,175,175)"/><rect x="25.00" y="3.00" width="5.80" height="5.60" fill="rgb(223,223,223)"/><rect x="36.00" y="3.00" width="5.80" height="5.60" fill="rgb(209,209,209)"/><rect x="41.50" y="3.00" width="5.80" height="5.60" fill="rgb(203,203,203)"/><rect x="47.00" y="3.00" width="5.80" height="5.60" fill="rgb(227,227,227)"/><rect x="52.50" y="3.00" width="5.80" height="5.60" fill="rgb(214,214,214)"/><rect x="63.50" y="3.00" width="5.80" height="5.60" fill="rgb(224,224,224)"/><rect x="74.50" y="3.00" width="5.80" height="5.60" fill="rgb(207,207,207)"/><rect x="80.00" y="3.00" width="5.80" height="5.60" fill="rgb(206,206,206)"/><rect x="85.50" y="3.00" width="5.80" height="5.60" fill="rgb(207,207,207)"/><rect x="91.00" y="3.00" width="5.80" height="5.60" fill="rgb(203,203,203)"/><rect x="102.00" y="3.00" width="5.80" height="5.60" fill="rgb(212,212,212)"/><rect x="107.50" y="3.00" width="5.80" height="5.60" fill="rgb(225,225,225)"/><rect x="113.00" y="3.00" width="5.80" height="5.60" fill="rgb(225,225,225)"/><rect x="118.50" y="3.00" width="5.80" height="5.60" fill="rgb(214,214,214)"/><rect x="124.00" y="3.00" width="5.80" height="5.60" fill="rgb(200,200,200)"/><rect x="129.50" y="3.00" width="5.80" height="5.60" fill="rgb(205,205,205)"/><rect x="135.00" y="3.00" width="5.80" height="5.60" fill="rgb(215,215,215)"/><rect x="140.50" y="3.00" width="5.80" height="5.60" fill="rgb(205,205,205)"/><rect x="8.50" y="8.30" width="5.80" height="5.60" fill="rgb(212,212,212)"/><rect x="14.00" y="8.30" width="5.80" height="5.60" fill="rgb(134,134,134)"/><rect x="19.50" y="8.30" width="5.80" height="5.60" fill="rgb(156,156,156)"/><rect x="25.00" y="8.30" width="5.80" height="5.60" fill="rgb(138,138,138)"/><rect x="30.50" y="8.30" width="5.80" height="5.60" fill="rgb(147,147,147)"/><rect x="36.00" y="8.30" width="5.80" height="5.60" fill="rgb(154,154,154)"/><rect x="41.50" y="8.30" width="5.80" height="5.60" fill="rgb(149,149,149)"/><rect x="47.00" y="8.30" width="5.80" height="5.60" fill="rgb(218,218,218)"/><rect x="52.50" y="8.30" width="5.80" height="5.60" fill="rgb(143,143,143)"/><rect x="58.00" y="8.30" width="5.80" height="5.60" fill="rgb(148,148,148)"/><rect x="63.50" y="8.30" width="5.80" height="5.60" fill="rgb(149,149,149)"/><rect x="69.00" y="8.30" width="5.80" height="5.60" fill="rgb(155,155,155)"/><rect x="74.50" y="8.30" width="5.80" height="5.60" fill="rgb(136,136,136)"/><rect x="80.00" y="8.30" width="5.80" height="5.60" fill="rgb(149,149,149)"/><rect x="85.50" y="8.30" width="5.80" height="5.60" fill="rgb(140,140,140)"/><rect x="91.00" y="8.30" width="5.80" height="5.60" fill="rgb(141,141,141)"/><rect x="96.50" y="8.30" width="5.80" height="5.60" fill="rgb(155,155,155)"/><rect x="102.00" y="8.30" width="5.80" height="5.60" fill="rgb(148,148,148)"/><rect x="107.50" y="8.30" width="5.80" height="5.60" fill="rgb(149,149,149)"/><rect x="113.00" y="8.30" width="5.80" height="5.60" fill="rgb(205,205,205)"/><rect x="118.50" y="8.30" width="5.80" height="5.60" fill="rgb(155,155,155)"/><rect x="124.00" y="8.30" width="5.80" height="5.60" fill="rgb(159,159,159)"/><rect x="129.50" y="8.30" width="5.80" height="5.60" fill="rgb(146,146,146)"/><rect x="135.00" y="8.30" width="5.80" height="5.60" fill="rgb(225,225,225)"/><rect x="8.50" y="13.60" width="5.80" height="5.60" fill="rgb(232,232,232)"/><rect x="14.00" y="13.60" width="5.80" height="5.60" fill="rgb(210,210,210)"/><rect x="19.50" y="13.60" width="5.80" height="5.60" fill="rgb(208,208,208)"/><rect x="25.00" y="13.60" width="5.80" height="5.60" fill="rgb(208,208,208)"/><rect x="30.50" y="13.60" width="5.80" height="5.60" fill="rgb(211,211,211)"/><rect x="36.00" y="13.60" width="5.80" height="5.60" fill="rgb(207,207,207)"/><rect x="41.50" y="13.60" width="5.80" height="5.60" fill="rgb(208,208,208)"/><rect x="47.00" y="13.60" width="5.80" height="5.60" fill="rgb(228,228,228)"/><rect x="52.50" y="13.60" width="5.80" height="5.60" fill="rgb(216,216,216)"/><rect x="58.00" y="13.60" width="5.80" height="5.60" fill="rgb(211,211,211)"/><rect x="63.50" y="13.60" width="5.80" height="5.60" fill="rgb(215,215,215)"/><rect x="69.00" y="13.60" width="5.80" height="5.60" fill="rgb(216,216,216)"/><rect x="74.50" y="13.60" width="5.80" height="5.60" fill="rgb(203,203,203)"/><rect x="80.00" y="13.60" width="5.80" height="5.60" fill="rgb(209,209,209)"/><rect x="85.50" y="13.60" width="5.80" height="5.60" fill="rgb(216,216,216)"/><rect x="91.00" y="13.60" width="5.80" height="5.60" fill="rgb(214,214,214)"/><rect x="96.50" y="13.60" width="5.80" height="5.60" fill="rgb(200,200,200)"/><rect x="102.00" y="13.60" width="5.80" height="5.60" fill="rgb(200,200,200)"/><rect x="107.50" y="13.60" width="5.80" height="5.60" fill="rgb(206,206,206)"/><rect x="113.00" y="13.60" width="5.80" height="5.60" fill="rgb(199,199,199)"/><rect x="118.50" y="13.60" width="5.80" height="5.60" fill="rgb(202,202,202)"/><rect x="124.00" y="13.60" width="5.80" height="5.60" fill="rgb(199,199,199)"/><rect x="129.50" y="13.60" width="5.80" height="5.60" fill="rgb(211,211,211)"/></g></svg>
<div class="a acc" style="left:763.6px;top:821.2px"></div>
<div class="a rr" style="left:1845px;top:821.6px"></div>
<svg class="a" style="left:1309.00px;top:819.80px" width="204.00" height="21.90"><defs><filter id="b1312_822" x="-10%" y="-30%" width="120%" height="160%"><feGaussianBlur stdDeviation="0.6"/></filter></defs><g filter="url(#b1312_822)"><rect x="3.00" y="3.00" width="5.80" height="5.60" fill="rgb(215,215,215)"/><rect x="19.50" y="3.00" width="5.80" height="5.60" fill="rgb(234,234,234)"/><rect x="30.50" y="3.00" width="5.80" height="5.60" fill="rgb(237,237,237)"/><rect x="41.50" y="3.00" width="5.80" height="5.60" fill="rgb(239,239,239)"/><rect x="47.00" y="3.00" width="5.80" height="5.60" fill="rgb(230,230,230)"/><rect x="63.50" y="3.00" width="5.80" height="5.60" fill="rgb(229,229,229)"/><rect x="74.50" y="3.00" width="5.80" height="5.60" fill="rgb(225,225,225)"/><rect x="80.00" y="3.00" width="5.80" height="5.60" fill="rgb(234,234,234)"/><rect x="85.50" y="3.00" width="5.80" height="5.60" fill="rgb(231,231,231)"/><rect x="96.50" y="3.00" width="5.80" height="5.60" fill="rgb(227,227,227)"/><rect x="113.00" y="3.00" width="5.80" height="5.60" fill="rgb(239,239,239)"/><rect x="129.50" y="3.00" width="5.80" height="5.60" fill="rgb(226,226,226)"/><rect x="135.00" y="3.00" width="5.80" height="5.60" fill="rgb(236,236,236)"/><rect x="140.50" y="3.00" width="5.80" height="5.60" fill="rgb(224,224,224)"/><rect x="162.50" y="3.00" width="5.80" height="5.60" fill="rgb(224,224,224)"/><rect x="184.50" y="3.00" width="5.80" height="5.60" fill="rgb(223,223,223)"/><rect x="195.50" y="3.00" width="5.80" height="5.60" fill="rgb(210,210,210)"/><rect x="8.50" y="8.30" width="5.80" height="5.60" fill="rgb(154,154,154)"/><rect x="14.00" y="8.30" width="5.80" height="5.60" fill="rgb(148,148,148)"/><rect x="19.50" y="8.30" width="5.80" height="5.60" fill="rgb(139,139,139)"/><rect x="25.00" y="8.30" width="5.80" height="5.60" fill="rgb(160,160,160)"/><rect x="30.50" y="8.30" width="5.80" height="5.60" fill="rgb(153,153,153)"/><rect x="36.00" y="8.30" width="5.80" height="5.60" fill="rgb(157,157,157)"/><rect x="41.50" y="8.30" width="5.80" height="5.60" fill="rgb(140,140,140)"/><rect x="47.00" y="8.30" width="5.80" height="5.60" fill="rgb(158,158,158)"/><rect x="52.50" y="8.30" width="5.80" height="5.60" fill="rgb(139,139,139)"/><rect x="58.00" y="8.30" width="5.80" height="5.60" fill="rgb(158,158,158)"/><rect x="63.50" y="8.30" width="5.80" height="5.60" fill="rgb(148,148,148)"/><rect x="69.00" y="8.30" width="5.80" height="5.60" fill="rgb(146,146,146)"/><rect x="74.50" y="8.30" width="5.80" height="5.60" fill="rgb(151,151,151)"/><rect x="80.00" y="8.30" width="5.80" height="5.60" fill="rgb(160,160,160)"/><rect x="85.50" y="8.30" width="5.80" height="5.60" fill="rgb(144,144,144)"/><rect x="91.00" y="8.30" width="5.80" height="5.60" fill="rgb(141,141,141)"/><rect x="96.50" y="8.30" width="5.80" height="5.60" fill="rgb(205,205,205)"/><rect x="102.00" y="8.30" width="5.80" height="5.60" fill="rgb(215,215,215)"/><rect x="107.50" y="8.30" width="5.80" height="5.60" fill="rgb(150,150,150)"/><rect x="113.00" y="8.30" width="5.80" height="5.60" fill="rgb(143,143,143)"/><rect x="118.50" y="8.30" width="5.80" height="5.60" fill="rgb(140,140,140)"/><rect x="124.00" y="8.30" width="5.80" height="5.60" fill="rgb(141,141,141)"/><rect x="129.50" y="8.30" width="5.80" height="5.60" fill="rgb(139,139,139)"/><rect x="135.00" y="8.30" width="5.80" height="5.60" fill="rgb(142,142,142)"/><rect x="140.50" y="8.30" width="5.80" height="5.60" fill="rgb(145,145,145)"/><rect x="146.00" y="8.30" width="5.80" height="5.60" fill="rgb(145,145,145)"/><rect x="151.50" y="8.30" width="5.80" height="5.60" fill="rgb(156,156,156)"/><rect x="157.00" y="8.30" width="5.80" height="5.60" fill="rgb(144,144,144)"/><rect x="162.50" y="8.30" width="5.80" height="5.60" fill="rgb(150,150,150)"/><rect x="168.00" y="8.30" width="5.80" height="5.60" fill="rgb(142,142,142)"/><rect x="173.50" y="8.30" width="5.80" height="5.60" fill="rgb(146,146,146)"/><rect x="179.00" y="8.30" width="5.80" height="5.60" fill="rgb(138,138,138)"/><rect x="184.50" y="8.30" width="5.80" height="5.60" fill="rgb(144,144,144)"/><rect x="190.00" y="8.30" width="5.80" height="5.60" fill="rgb(138,138,138)"/><rect x="195.50" y="8.30" width="5.80" height="5.60" fill="rgb(222,222,222)"/><rect x="8.50" y="13.60" width="5.80" height="5.60" fill="rgb(220,220,220)"/><rect x="14.00" y="13.60" width="5.80" height="5.60" fill="rgb(208,208,208)"/><rect x="19.50" y="13.60" width="5.80" height="5.60" fill="rgb(203,203,203)"/><rect x="25.00" y="13.60" width="5.80" height="5.60" fill="rgb(143,143,143)"/><rect x="30.50" y="13.60" width="5.80" height="5.60" fill="rgb(201,201,201)"/><rect x="36.00" y="13.60" width="5.80" height="5.60" fill="rgb(213,213,213)"/><rect x="41.50" y="13.60" width="5.80" height="5.60" fill="rgb(142,142,142)"/><rect x="47.00" y="13.60" width="5.80" height="5.60" fill="rgb(210,210,210)"/><rect x="52.50" y="13.60" width="5.80" height="5.60" fill="rgb(200,200,200)"/><rect x="58.00" y="13.60" width="5.80" height="5.60" fill="rgb(149,149,149)"/><rect x="63.50" y="13.60" width="5.80" height="5.60" fill="rgb(210,210,210)"/><rect x="69.00" y="13.60" width="5.80" height="5.60" fill="rgb(199,199,199)"/><rect x="74.50" y="13.60" width="5.80" height="5.60" fill="rgb(150,150,150)"/><rect x="80.00" y="13.60" width="5.80" height="5.60" fill="rgb(207,207,207)"/><rect x="85.50" y="13.60" width="5.80" height="5.60" fill="rgb(214,214,214)"/><rect x="91.00" y="13.60" width="5.80" height="5.60" fill="rgb(146,146,146)"/><rect x="96.50" y="13.60" width="5.80" height="5.60" fill="rgb(225,225,225)"/><rect x="102.00" y="13.60" width="5.80" height="5.60" fill="rgb(222,222,222)"/><rect x="107.50" y="13.60" width="5.80" height="5.60" fill="rgb(152,152,152)"/><rect x="113.00" y="13.60" width="5.80" height="5.60" fill="rgb(200,200,200)"/><rect x="118.50" y="13.60" width="5.80" height="5.60" fill="rgb(198,198,198)"/><rect x="124.00" y="13.60" width="5.80" height="5.60" fill="rgb(141,141,141)"/><rect x="129.50" y="13.60" width="5.80" height="5.60" fill="rgb(193,193,193)"/><rect x="135.00" y="13.60" width="5.80" height="5.60" fill="rgb(191,191,191)"/><rect x="140.50" y="13.60" width="5.80" height="5.60" fill="rgb(154,154,154)"/><rect x="146.00" y="13.60" width="5.80" height="5.60" fill="rgb(196,196,196)"/><rect x="151.50" y="13.60" width="5.80" height="5.60" fill="rgb(194,194,194)"/><rect x="157.00" y="13.60" width="5.80" height="5.60" fill="rgb(141,141,141)"/><rect x="162.50" y="13.60" width="5.80" height="5.60" fill="rgb(211,211,211)"/><rect x="168.00" y="13.60" width="5.80" height="5.60" fill="rgb(211,211,211)"/><rect x="173.50" y="13.60" width="5.80" height="5.60" fill="rgb(153,153,153)"/><rect x="179.00" y="13.60" width="5.80" height="5.60" fill="rgb(197,197,197)"/><rect x="184.50" y="13.60" width="5.80" height="5.60" fill="rgb(196,196,196)"/><rect x="190.00" y="13.60" width="5.80" height="5.60" fill="rgb(145,145,145)"/></g></svg>
<div class="a acc" style="left:763.6px;top:856.2px"></div>
<div class="a rr" style="left:1845px;top:856.6px"></div>
<svg class="a" style="left:1309.00px;top:859.00px" width="204.00" height="21.90"><defs><filter id="b1312_862" x="-10%" y="-30%" width="120%" height="160%"><feGaussianBlur stdDeviation="0.6"/></filter></defs><g filter="url(#b1312_862)"><rect x="3.00" y="3.00" width="5.80" height="5.60" fill="rgb(218,218,218)"/><rect x="8.50" y="3.00" width="5.80" height="5.60" fill="rgb(189,189,189)"/><rect x="14.00" y="3.00" width="5.80" height="5.60" fill="rgb(183,183,183)"/><rect x="19.50" y="3.00" width="5.80" height="5.60" fill="rgb(188,188,188)"/><rect x="25.00" y="3.00" width="5.80" height="5.60" fill="rgb(185,185,185)"/><rect x="30.50" y="3.00" width="5.80" height="5.60" fill="rgb(199,199,199)"/><rect x="36.00" y="3.00" width="5.80" height="5.60" fill="rgb(199,199,199)"/><rect x="41.50" y="3.00" width="5.80" height="5.60" fill="rgb(190,190,190)"/><rect x="47.00" y="3.00" width="5.80" height="5.60" fill="rgb(184,184,184)"/><rect x="52.50" y="3.00" width="5.80" height="5.60" fill="rgb(199,199,199)"/><rect x="58.00" y="3.00" width="5.80" height="5.60" fill="rgb(186,186,186)"/><rect x="63.50" y="3.00" width="5.80" height="5.60" fill="rgb(187,187,187)"/><rect x="69.00" y="3.00" width="5.80" height="5.60" fill="rgb(180,180,180)"/><rect x="74.50" y="3.00" width="5.80" height="5.60" fill="rgb(187,187,187)"/><rect x="80.00" y="3.00" width="5.80" height="5.60" fill="rgb(189,189,189)"/><rect x="85.50" y="3.00" width="5.80" height="5.60" fill="rgb(190,190,190)"/><rect x="91.00" y="3.00" width="5.80" height="5.60" fill="rgb(184,184,184)"/><rect x="96.50" y="3.00" width="5.80" height="5.60" fill="rgb(190,190,190)"/><rect x="102.00" y="3.00" width="5.80" height="5.60" fill="rgb(180,180,180)"/><rect x="107.50" y="3.00" width="5.80" height="5.60" fill="rgb(185,185,185)"/><rect x="113.00" y="3.00" width="5.80" height="5.60" fill="rgb(181,181,181)"/><rect x="118.50" y="3.00" width="5.80" height="5.60" fill="rgb(187,187,187)"/><rect x="124.00" y="3.00" width="5.80" height="5.60" fill="rgb(180,180,180)"/><rect x="129.50" y="3.00" width="5.80" height="5.60" fill="rgb(180,180,180)"/><rect x="135.00" y="3.00" width="5.80" height="5.60" fill="rgb(186,186,186)"/><rect x="140.50" y="3.00" width="5.80" height="5.60" fill="rgb(184,184,184)"/><rect x="146.00" y="3.00" width="5.80" height="5.60" fill="rgb(191,191,191)"/><rect x="151.50" y="3.00" width="5.80" height="5.60" fill="rgb(190,190,190)"/><rect x="157.00" y="3.00" width="5.80" height="5.60" fill="rgb(195,195,195)"/><rect x="162.50" y="3.00" width="5.80" height="5.60" fill="rgb(193,193,193)"/><rect x="168.00" y="3.00" width="5.80" height="5.60" fill="rgb(194,194,194)"/><rect x="173.50" y="3.00" width="5.80" height="5.60" fill="rgb(197,197,197)"/><rect x="179.00" y="3.00" width="5.80" height="5.60" fill="rgb(187,187,187)"/><rect x="184.50" y="3.00" width="5.80" height="5.60" fill="rgb(186,186,186)"/><rect x="190.00" y="3.00" width="5.80" height="5.60" fill="rgb(199,199,199)"/><rect x="195.50" y="3.00" width="5.80" height="5.60" fill="rgb(215,215,215)"/><rect x="8.50" y="8.30" width="5.80" height="5.60" fill="rgb(212,212,212)"/><rect x="14.00" y="8.30" width="5.80" height="5.60" fill="rgb(169,169,169)"/><rect x="19.50" y="8.30" width="5.80" height="5.60" fill="rgb(166,166,166)"/><rect x="25.00" y="8.30" width="5.80" height="5.60" fill="rgb(139,139,139)"/><rect x="30.50" y="8.30" width="5.80" height="5.60" fill="rgb(174,174,174)"/><rect x="36.00" y="8.30" width="5.80" height="5.60" fill="rgb(177,177,177)"/><rect x="41.50" y="8.30" width="5.80" height="5.60" fill="rgb(165,165,165)"/><rect x="47.00" y="8.30" width="5.80" height="5.60" fill="rgb(170,170,170)"/><rect x="52.50" y="8.30" width="5.80" height="5.60" fill="rgb(173,173,173)"/><rect x="58.00" y="8.30" width="5.80" height="5.60" fill="rgb(144,144,144)"/><rect x="63.50" y="8.30" width="5.80" height="5.60" fill="rgb(161,161,161)"/><rect x="69.00" y="8.30" width="5.80" height="5.60" fill="rgb(160,160,160)"/><rect x="74.50" y="8.30" width="5.80" height="5.60" fill="rgb(174,174,174)"/><rect x="80.00" y="8.30" width="5.80" height="5.60" fill="rgb(173,173,173)"/><rect x="85.50" y="8.30" width="5.80" height="5.60" fill="rgb(174,174,174)"/><rect x="91.00" y="8.30" width="5.80" height="5.60" fill="rgb(163,163,163)"/><rect x="96.50" y="8.30" width="5.80" height="5.60" fill="rgb(210,210,210)"/><rect x="102.00" y="8.30" width="5.80" height="5.60" fill="rgb(212,212,212)"/><rect x="107.50" y="8.30" width="5.80" height="5.60" fill="rgb(177,177,177)"/><rect x="113.00" y="8.30" width="5.80" height="5.60" fill="rgb(168,168,168)"/><rect x="118.50" y="8.30" width="5.80" height="5.60" fill="rgb(168,168,168)"/><rect x="124.00" y="8.30" width="5.80" height="5.60" fill="rgb(148,148,148)"/><rect x="129.50" y="8.30" width="5.80" height="5.60" fill="rgb(139,139,139)"/><rect x="135.00" y="8.30" width="5.80" height="5.60" fill="rgb(143,143,143)"/><rect x="140.50" y="8.30" width="5.80" height="5.60" fill="rgb(153,153,153)"/><rect x="146.00" y="8.30" width="5.80" height="5.60" fill="rgb(142,142,142)"/><rect x="151.50" y="8.30" width="5.80" height="5.60" fill="rgb(174,174,174)"/><rect x="157.00" y="8.30" width="5.80" height="5.60" fill="rgb(162,162,162)"/><rect x="162.50" y="8.30" width="5.80" height="5.60" fill="rgb(165,165,165)"/><rect x="168.00" y="8.30" width="5.80" height="5.60" fill="rgb(165,165,165)"/><rect x="173.50" y="8.30" width="5.80" height="5.60" fill="rgb(167,167,167)"/><rect x="179.00" y="8.30" width="5.80" height="5.60" fill="rgb(159,159,159)"/><rect x="184.50" y="8.30" width="5.80" height="5.60" fill="rgb(138,138,138)"/><rect x="190.00" y="8.30" width="5.80" height="5.60" fill="rgb(173,173,173)"/><rect x="36.00" y="13.60" width="5.80" height="5.60" fill="rgb(233,233,233)"/><rect x="41.50" y="13.60" width="5.80" height="5.60" fill="rgb(223,223,223)"/><rect x="47.00" y="13.60" width="5.80" height="5.60" fill="rgb(233,233,233)"/><rect x="52.50" y="13.60" width="5.80" height="5.60" fill="rgb(233,233,233)"/><rect x="69.00" y="13.60" width="5.80" height="5.60" fill="rgb(229,229,229)"/><rect x="96.50" y="13.60" width="5.80" height="5.60" fill="rgb(224,224,224)"/><rect x="102.00" y="13.60" width="5.80" height="5.60" fill="rgb(233,233,233)"/><rect x="107.50" y="13.60" width="5.80" height="5.60" fill="rgb(231,231,231)"/><rect x="113.00" y="13.60" width="5.80" height="5.60" fill="rgb(222,222,222)"/><rect x="118.50" y="13.60" width="5.80" height="5.60" fill="rgb(232,232,232)"/><rect x="135.00" y="13.60" width="5.80" height="5.60" fill="rgb(230,230,230)"/><rect x="151.50" y="13.60" width="5.80" height="5.60" fill="rgb(236,236,236)"/><rect x="157.00" y="13.60" width="5.80" height="5.60" fill="rgb(237,237,237)"/><rect x="168.00" y="13.60" width="5.80" height="5.60" fill="rgb(229,229,229)"/><rect x="184.50" y="13.60" width="5.80" height="5.60" fill="rgb(226,226,226)"/></g></svg>
<div class="a acc" style="left:763.6px;top:891.2px"></div>
<div class="a rr" style="left:1845px;top:891.6px"></div>
<svg class="a" style="left:1309.00px;top:892.00px" width="176.50" height="21.90"><defs><filter id="b1312_895" x="-10%" y="-30%" width="120%" height="160%"><feGaussianBlur stdDeviation="0.6"/></filter></defs><g filter="url(#b1312_895)"><rect x="3.00" y="3.00" width="5.80" height="5.60" fill="rgb(220,220,220)"/><rect x="8.50" y="3.00" width="5.80" height="5.60" fill="rgb(170,170,170)"/><rect x="14.00" y="3.00" width="5.80" height="5.60" fill="rgb(225,225,225)"/><rect x="19.50" y="3.00" width="5.80" height="5.60" fill="rgb(224,224,224)"/><rect x="30.50" y="3.00" width="5.80" height="5.60" fill="rgb(231,231,231)"/><rect x="52.50" y="3.00" width="5.80" height="5.60" fill="rgb(233,233,233)"/><rect x="58.00" y="3.00" width="5.80" height="5.60" fill="rgb(212,212,212)"/><rect x="63.50" y="3.00" width="5.80" height="5.60" fill="rgb(223,223,223)"/><rect x="69.00" y="3.00" width="5.80" height="5.60" fill="rgb(219,219,219)"/><rect x="74.50" y="3.00" width="5.80" height="5.60" fill="rgb(220,220,220)"/><rect x="80.00" y="3.00" width="5.80" height="5.60" fill="rgb(232,232,232)"/><rect x="85.50" y="3.00" width="5.80" height="5.60" fill="rgb(230,230,230)"/><rect x="96.50" y="3.00" width="5.80" height="5.60" fill="rgb(234,234,234)"/><rect x="113.00" y="3.00" width="5.80" height="5.60" fill="rgb(220,220,220)"/><rect x="118.50" y="3.00" width="5.80" height="5.60" fill="rgb(235,235,235)"/><rect x="129.50" y="3.00" width="5.80" height="5.60" fill="rgb(222,222,222)"/><rect x="135.00" y="3.00" width="5.80" height="5.60" fill="rgb(213,213,213)"/><rect x="140.50" y="3.00" width="5.80" height="5.60" fill="rgb(232,232,232)"/><rect x="146.00" y="3.00" width="5.80" height="5.60" fill="rgb(234,234,234)"/><rect x="151.50" y="3.00" width="5.80" height="5.60" fill="rgb(218,218,218)"/><rect x="168.00" y="3.00" width="5.80" height="5.60" fill="rgb(210,210,210)"/><rect x="8.50" y="8.30" width="5.80" height="5.60" fill="rgb(143,143,143)"/><rect x="14.00" y="8.30" width="5.80" height="5.60" fill="rgb(148,148,148)"/><rect x="19.50" y="8.30" width="5.80" height="5.60" fill="rgb(164,164,164)"/><rect x="25.00" y="8.30" width="5.80" height="5.60" fill="rgb(162,162,162)"/><rect x="30.50" y="8.30" width="5.80" height="5.60" fill="rgb(160,160,160)"/><rect x="36.00" y="8.30" width="5.80" height="5.60" fill="rgb(155,155,155)"/><rect x="41.50" y="8.30" width="5.80" height="5.60" fill="rgb(163,163,163)"/><rect x="47.00" y="8.30" width="5.80" height="5.60" fill="rgb(164,164,164)"/><rect x="52.50" y="8.30" width="5.80" height="5.60" fill="rgb(153,153,153)"/><rect x="58.00" y="8.30" width="5.80" height="5.60" fill="rgb(158,158,158)"/><rect x="63.50" y="8.30" width="5.80" height="5.60" fill="rgb(139,139,139)"/><rect x="69.00" y="8.30" width="5.80" height="5.60" fill="rgb(158,158,158)"/><rect x="74.50" y="8.30" width="5.80" height="5.60" fill="rgb(212,212,212)"/><rect x="80.00" y="8.30" width="5.80" height="5.60" fill="rgb(150,150,150)"/><rect x="85.50" y="8.30" width="5.80" height="5.60" fill="rgb(159,159,159)"/><rect x="91.00" y="8.30" width="5.80" height="5.60" fill="rgb(156,156,156)"/><rect x="96.50" y="8.30" width="5.80" height="5.60" fill="rgb(146,146,146)"/><rect x="102.00" y="8.30" width="5.80" height="5.60" fill="rgb(139,139,139)"/><rect x="107.50" y="8.30" width="5.80" height="5.60" fill="rgb(163,163,163)"/><rect x="113.00" y="8.30" width="5.80" height="5.60" fill="rgb(141,141,141)"/><rect x="118.50" y="8.30" width="5.80" height="5.60" fill="rgb(151,151,151)"/><rect x="124.00" y="8.30" width="5.80" height="5.60" fill="rgb(147,147,147)"/><rect x="129.50" y="8.30" width="5.80" height="5.60" fill="rgb(146,146,146)"/><rect x="135.00" y="8.30" width="5.80" height="5.60" fill="rgb(158,158,158)"/><rect x="140.50" y="8.30" width="5.80" height="5.60" fill="rgb(165,165,165)"/><rect x="146.00" y="8.30" width="5.80" height="5.60" fill="rgb(145,145,145)"/><rect x="151.50" y="8.30" width="5.80" height="5.60" fill="rgb(156,156,156)"/><rect x="157.00" y="8.30" width="5.80" height="5.60" fill="rgb(146,146,146)"/><rect x="162.50" y="8.30" width="5.80" height="5.60" fill="rgb(218,218,218)"/><rect x="14.00" y="13.60" width="5.80" height="5.60" fill="rgb(199,199,199)"/><rect x="19.50" y="13.60" width="5.80" height="5.60" fill="rgb(195,195,195)"/><rect x="25.00" y="13.60" width="5.80" height="5.60" fill="rgb(190,190,190)"/><rect x="30.50" y="13.60" width="5.80" height="5.60" fill="rgb(189,189,189)"/><rect x="36.00" y="13.60" width="5.80" height="5.60" fill="rgb(190,190,190)"/><rect x="41.50" y="13.60" width="5.80" height="5.60" fill="rgb(207,207,207)"/><rect x="47.00" y="13.60" width="5.80" height="5.60" fill="rgb(197,197,197)"/><rect x="52.50" y="13.60" width="5.80" height="5.60" fill="rgb(191,191,191)"/><rect x="58.00" y="13.60" width="5.80" height="5.60" fill="rgb(207,207,207)"/><rect x="63.50" y="13.60" width="5.80" height="5.60" fill="rgb(209,209,209)"/><rect x="69.00" y="13.60" width="5.80" height="5.60" fill="rgb(196,196,196)"/><rect x="74.50" y="13.60" width="5.80" height="5.60" fill="rgb(225,225,225)"/><rect x="80.00" y="13.60" width="5.80" height="5.60" fill="rgb(190,190,190)"/><rect x="85.50" y="13.60" width="5.80" height="5.60" fill="rgb(188,188,188)"/><rect x="91.00" y="13.60" width="5.80" height="5.60" fill="rgb(194,194,194)"/><rect x="96.50" y="13.60" width="5.80" height="5.60" fill="rgb(188,188,188)"/><rect x="102.00" y="13.60" width="5.80" height="5.60" fill="rgb(191,191,191)"/><rect x="107.50" y="13.60" width="5.80" height="5.60" fill="rgb(192,192,192)"/><rect x="113.00" y="13.60" width="5.80" height="5.60" fill="rgb(199,199,199)"/><rect x="118.50" y="13.60" width="5.80" height="5.60" fill="rgb(207,207,207)"/><rect x="124.00" y="13.60" width="5.80" height="5.60" fill="rgb(203,203,203)"/><rect x="129.50" y="13.60" width="5.80" height="5.60" fill="rgb(195,195,195)"/><rect x="135.00" y="13.60" width="5.80" height="5.60" fill="rgb(195,195,195)"/><rect x="140.50" y="13.60" width="5.80" height="5.60" fill="rgb(198,198,198)"/><rect x="146.00" y="13.60" width="5.80" height="5.60" fill="rgb(195,195,195)"/><rect x="151.50" y="13.60" width="5.80" height="5.60" fill="rgb(194,194,194)"/><rect x="157.00" y="13.60" width="5.80" height="5.60" fill="rgb(187,187,187)"/></g></svg>
<div class="a acc" style="left:763.6px;top:926.2px"></div>
<div class="a rr" style="left:1845px;top:926.6px"></div>
<svg class="a" style="left:1309.00px;top:926.00px" width="204.00" height="21.90"><defs><filter id="b1312_929" x="-10%" y="-30%" width="120%" height="160%"><feGaussianBlur stdDeviation="0.6"/></filter></defs><g filter="url(#b1312_929)"><rect x="3.00" y="3.00" width="5.80" height="5.60" fill="rgb(215,215,215)"/><rect x="8.50" y="3.00" width="5.80" height="5.60" fill="rgb(239,239,239)"/><rect x="14.00" y="3.00" width="5.80" height="5.60" fill="rgb(231,231,231)"/><rect x="30.50" y="3.00" width="5.80" height="5.60" fill="rgb(226,226,226)"/><rect x="36.00" y="3.00" width="5.80" height="5.60" fill="rgb(229,229,229)"/><rect x="63.50" y="3.00" width="5.80" height="5.60" fill="rgb(222,222,222)"/><rect x="91.00" y="3.00" width="5.80" height="5.60" fill="rgb(229,229,229)"/><rect x="118.50" y="3.00" width="5.80" height="5.60" fill="rgb(223,223,223)"/><rect x="124.00" y="3.00" width="5.80" height="5.60" fill="rgb(231,231,231)"/><rect x="168.00" y="3.00" width="5.80" height="5.60" fill="rgb(236,236,236)"/><rect x="173.50" y="3.00" width="5.80" height="5.60" fill="rgb(238,238,238)"/><rect x="184.50" y="3.00" width="5.80" height="5.60" fill="rgb(224,224,224)"/><rect x="195.50" y="3.00" width="5.80" height="5.60" fill="rgb(210,210,210)"/><rect x="8.50" y="8.30" width="5.80" height="5.60" fill="rgb(144,144,144)"/><rect x="14.00" y="8.30" width="5.80" height="5.60" fill="rgb(153,153,153)"/><rect x="19.50" y="8.30" width="5.80" height="5.60" fill="rgb(154,154,154)"/><rect x="25.00" y="8.30" width="5.80" height="5.60" fill="rgb(140,140,140)"/><rect x="30.50" y="8.30" width="5.80" height="5.60" fill="rgb(139,139,139)"/><rect x="36.00" y="8.30" width="5.80" height="5.60" fill="rgb(150,150,150)"/><rect x="41.50" y="8.30" width="5.80" height="5.60" fill="rgb(151,151,151)"/><rect x="47.00" y="8.30" width="5.80" height="5.60" fill="rgb(147,147,147)"/><rect x="52.50" y="8.30" width="5.80" height="5.60" fill="rgb(143,143,143)"/><rect x="58.00" y="8.30" width="5.80" height="5.60" fill="rgb(152,152,152)"/><rect x="63.50" y="8.30" width="5.80" height="5.60" fill="rgb(138,138,138)"/><rect x="69.00" y="8.30" width="5.80" height="5.60" fill="rgb(145,145,145)"/><rect x="74.50" y="8.30" width="5.80" height="5.60" fill="rgb(149,149,149)"/><rect x="80.00" y="8.30" width="5.80" height="5.60" fill="rgb(161,161,161)"/><rect x="85.50" y="8.30" width="5.80" height="5.60" fill="rgb(153,153,153)"/><rect x="91.00" y="8.30" width="5.80" height="5.60" fill="rgb(159,159,159)"/><rect x="96.50" y="8.30" width="5.80" height="5.60" fill="rgb(205,205,205)"/><rect x="102.00" y="8.30" width="5.80" height="5.60" fill="rgb(215,215,215)"/><rect x="107.50" y="8.30" width="5.80" height="5.60" fill="rgb(149,149,149)"/><rect x="113.00" y="8.30" width="5.80" height="5.60" fill="rgb(143,143,143)"/><rect x="118.50" y="8.30" width="5.80" height="5.60" fill="rgb(143,143,143)"/><rect x="124.00" y="8.30" width="5.80" height="5.60" fill="rgb(161,161,161)"/><rect x="129.50" y="8.30" width="5.80" height="5.60" fill="rgb(154,154,154)"/><rect x="135.00" y="8.30" width="5.80" height="5.60" fill="rgb(145,145,145)"/><rect x="140.50" y="8.30" width="5.80" height="5.60" fill="rgb(138,138,138)"/><rect x="146.00" y="8.30" width="5.80" height="5.60" fill="rgb(149,149,149)"/><rect x="151.50" y="8.30" width="5.80" height="5.60" fill="rgb(154,154,154)"/><rect x="157.00" y="8.30" width="5.80" height="5.60" fill="rgb(148,148,148)"/><rect x="162.50" y="8.30" width="5.80" height="5.60" fill="rgb(144,144,144)"/><rect x="168.00" y="8.30" width="5.80" height="5.60" fill="rgb(154,154,154)"/><rect x="173.50" y="8.30" width="5.80" height="5.60" fill="rgb(160,160,160)"/><rect x="179.00" y="8.30" width="5.80" height="5.60" fill="rgb(143,143,143)"/><rect x="184.50" y="8.30" width="5.80" height="5.60" fill="rgb(138,138,138)"/><rect x="190.00" y="8.30" width="5.80" height="5.60" fill="rgb(146,146,146)"/><rect x="195.50" y="8.30" width="5.80" height="5.60" fill="rgb(222,222,222)"/><rect x="8.50" y="13.60" width="5.80" height="5.60" fill="rgb(220,220,220)"/><rect x="14.00" y="13.60" width="5.80" height="5.60" fill="rgb(200,200,200)"/><rect x="19.50" y="13.60" width="5.80" height="5.60" fill="rgb(207,207,207)"/><rect x="25.00" y="13.60" width="5.80" height="5.60" fill="rgb(143,143,143)"/><rect x="30.50" y="13.60" width="5.80" height="5.60" fill="rgb(209,209,209)"/><rect x="36.00" y="13.60" width="5.80" height="5.60" fill="rgb(208,208,208)"/><rect x="41.50" y="13.60" width="5.80" height="5.60" fill="rgb(150,150,150)"/><rect x="47.00" y="13.60" width="5.80" height="5.60" fill="rgb(195,195,195)"/><rect x="52.50" y="13.60" width="5.80" height="5.60" fill="rgb(214,214,214)"/><rect x="58.00" y="13.60" width="5.80" height="5.60" fill="rgb(146,146,146)"/><rect x="63.50" y="13.60" width="5.80" height="5.60" fill="rgb(210,210,210)"/><rect x="69.00" y="13.60" width="5.80" height="5.60" fill="rgb(195,195,195)"/><rect x="74.50" y="13.60" width="5.80" height="5.60" fill="rgb(144,144,144)"/><rect x="80.00" y="13.60" width="5.80" height="5.60" fill="rgb(209,209,209)"/><rect x="85.50" y="13.60" width="5.80" height="5.60" fill="rgb(197,197,197)"/><rect x="91.00" y="13.60" width="5.80" height="5.60" fill="rgb(159,159,159)"/><rect x="96.50" y="13.60" width="5.80" height="5.60" fill="rgb(225,225,225)"/><rect x="102.00" y="13.60" width="5.80" height="5.60" fill="rgb(222,222,222)"/><rect x="107.50" y="13.60" width="5.80" height="5.60" fill="rgb(144,144,144)"/><rect x="113.00" y="13.60" width="5.80" height="5.60" fill="rgb(200,200,200)"/><rect x="118.50" y="13.60" width="5.80" height="5.60" fill="rgb(206,206,206)"/><rect x="124.00" y="13.60" width="5.80" height="5.60" fill="rgb(158,158,158)"/><rect x="129.50" y="13.60" width="5.80" height="5.60" fill="rgb(193,193,193)"/><rect x="135.00" y="13.60" width="5.80" height="5.60" fill="rgb(199,199,199)"/><rect x="140.50" y="13.60" width="5.80" height="5.60" fill="rgb(144,144,144)"/><rect x="146.00" y="13.60" width="5.80" height="5.60" fill="rgb(214,214,214)"/><rect x="151.50" y="13.60" width="5.80" height="5.60" fill="rgb(193,193,193)"/><rect x="157.00" y="13.60" width="5.80" height="5.60" fill="rgb(141,141,141)"/><rect x="162.50" y="13.60" width="5.80" height="5.60" fill="rgb(191,191,191)"/><rect x="168.00" y="13.60" width="5.80" height="5.60" fill="rgb(199,199,199)"/><rect x="173.50" y="13.60" width="5.80" height="5.60" fill="rgb(157,157,157)"/><rect x="179.00" y="13.60" width="5.80" height="5.60" fill="rgb(212,212,212)"/><rect x="184.50" y="13.60" width="5.80" height="5.60" fill="rgb(208,208,208)"/><rect x="190.00" y="13.60" width="5.80" height="5.60" fill="rgb(159,159,159)"/></g></svg>
<div class="a" style="left:763.6px;top:943.7px;width:117px;height:13.3px;background:#efefef"></div>

<!--/TABLE-->
</body></html>
